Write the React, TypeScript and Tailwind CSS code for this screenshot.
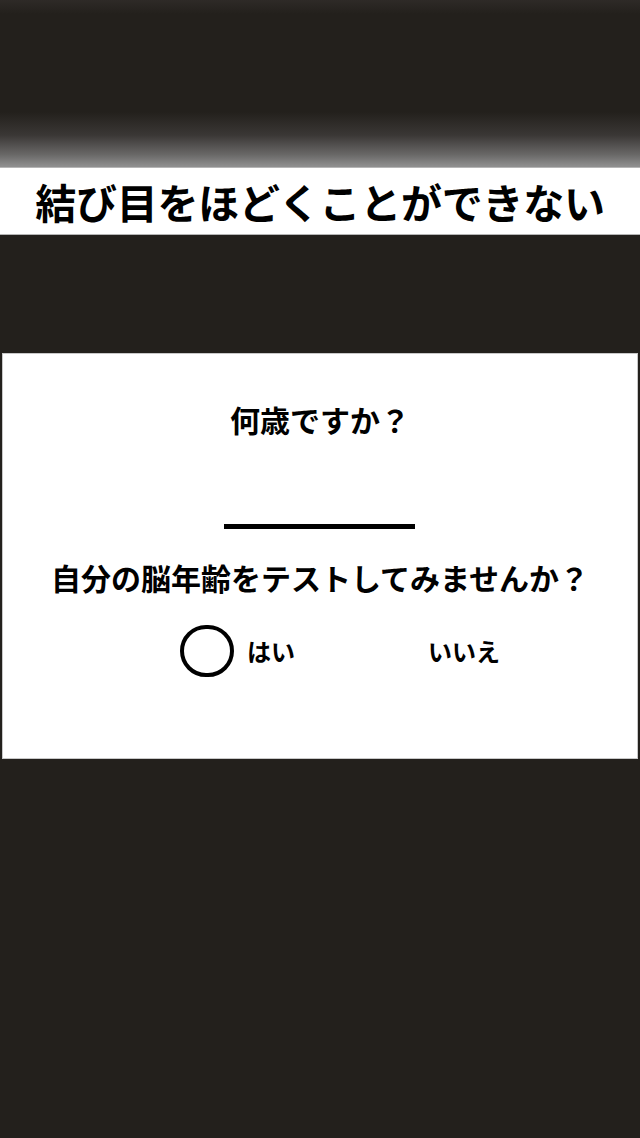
import React from "react";

export default function App() {
  const font = { fontFamily: '"Noto Sans CJK JP", "Noto Sans", sans-serif' };
  return (
    <div className="w-[640px] min-h-[1138px] bg-[#23201c] flex flex-col" style={font}>
      <div className="h-[167px] bg-[linear-gradient(to_bottom,#2e2a27_0px,#23201c_14px,#23201c_112px,#3a3735_135px,#6a6968_155px,#8e8e8e_166px)]" />
      <div className="h-[68px] bg-white border-t border-b border-[#b5b5b5] flex items-center justify-center">
        <span className="text-[41px] font-bold leading-none text-black tracking-[-0.25px]">
          結び目をほどくことができない
        </span>
      </div>
      <div className="h-[118px]" />
      <div className="mx-[2px] h-[406px] bg-white border border-[#c8c8c8] flex flex-col items-center pt-[50px]">
        <div className="text-[30px] font-bold leading-none text-black h-[30px]">何歳ですか？</div>
        <div className="mt-[90px] w-[191px] h-[5px] bg-black ml-[-2px]" />
        <div className="mt-[33px] text-[30px] font-bold leading-none text-black h-[30px]">
          自分の脳年齢をテストしてみませんか？
        </div>
        <div className="mt-[33px] self-stretch flex items-center pl-[177px]">
          <div className="w-[54px] h-[52px] rounded-full border-[4px] border-black" />
          <span className="ml-[13px] text-[24px] font-bold leading-none text-black">はい</span>
          <span className="ml-[133px] text-[24px] font-bold leading-none text-black">いいえ</span>
        </div>
      </div>
      <div className="flex-1" />
    </div>
  );
}
